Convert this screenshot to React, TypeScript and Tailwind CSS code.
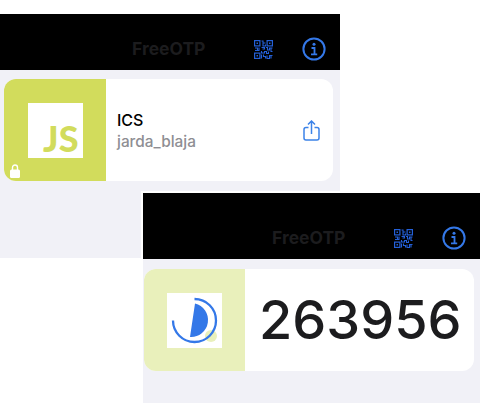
import React from 'react';

function QrIcon() {
  // QR glyph: three finder squares and a dense block of modules
  return (
    <svg width="19" height="19" viewBox="0 0 19 19" fill="none" stroke="#2460d8">
      <rect x="0.6" y="0.6" width="5.3" height="5.3" strokeWidth="1.2" />
      <rect x="13.1" y="0.6" width="5.3" height="5.3" strokeWidth="1.2" />
      <rect x="0.6" y="13.1" width="5.3" height="5.3" strokeWidth="1.2" />
      <path d="M2.5 2.5h1.5v1.5h-1.5zM15 2.5h1.5v1.5h-1.5zM2.5 15h1.5v1.5h-1.5z" fill="#2460d8" stroke="none" />
      <path
        d="M7.5 1h1.5v2h2.5M9 3v3h2.5V4.5M7.5 7.5h3v1.5h-2M1 8h2.5v2M5 7.5v3H1M12 7.5h1.5v2.5h2V8h3M17 8v3.5h1.5M7.5 11v2h3v-1.5h2v2h2v-2M7.5 14.5v4M9.5 14.5v2h2v2M13 15.5v3h2.500v-3h3M17 15.500v3"
        strokeWidth="1.1"
      />
    </svg>
  );
}

function InfoIcon() {
  return (
    <svg width="24" height="24" viewBox="0 0 24 24" fill="none" stroke="#3478e8">
      <circle cx="12" cy="12" r="10.6" strokeWidth="2" />
      <circle cx="12" cy="7.300" r="1.500" fill="#3478e8" stroke="none" />
      <path d="M9.500 11h3v6.200M9 17.300h6.200" strokeWidth="1.800" />
    </svg>
  );
}

function ShareIcon() {
  return (
    <svg width="17" height="21" viewBox="0 0 17 21" fill="none" stroke="#3b82e8" strokeWidth="1.5">
      <path d="M5.500 7.500H3a2 2 0 0 0-2 2v8.500a2 2 0 0 0 2 2h11a2 2 0 0 0 2-2V9.500a2 2 0 0 0-2-2h-2.500" />
      <path d="M8.500 14V1M5 4.500 8.500 1 12 4.500" />
    </svg>
  );
}

function LockIcon() {
  return (
    <svg width="10" height="14" viewBox="0 0 10 14" className="absolute left-[6px] bottom-[3px]">
      <path d="M2.500 6V3.500a2.500 2.500 0 0 1 5 0V6" fill="none" stroke="#fff" strokeWidth="1.400" />
      <rect x="0" y="5.500" width="10" height="8.500" rx="1.500" fill="#fff" />
    </svg>
  );
}

function Header({ heightClass, titleClass }: { heightClass: string; titleClass: string }) {
  return (
    <div className={`${heightClass} bg-black flex items-end`}>
      <div className={`h-[42px] flex items-center ${titleClass}`}>
        <span className="text-[17.500px] font-bold text-[#1c1c1e]">FreeOTP</span>
      </div>
      <div className="ml-auto h-[42px] flex items-center gap-[29px] pr-[14px]">
        <QrIcon />
        <InfoIcon />
      </div>
    </div>
  );
}

export default function App() {
  return (
    <div className="relative w-[480px] h-[419px] bg-white overflow-hidden font-['Inter','Liberation_Sans',sans-serif]">
      <div className="absolute left-0 top-[14px] w-[340px] h-[244px]">
        <Header heightClass="h-14" titleClass="pl-[132px]" />
        <div className="h-[188px] bg-[#f1f1f7] pt-[9px] px-[4px]">
          <div className="h-[102px] w-[329px] bg-white rounded-xl overflow-hidden flex items-center">
            <div className="relative w-[102px] h-full bg-[#d2dc5c] flex items-center justify-center">
              <div className="w-[55px] h-[55px] bg-white flex items-end justify-end pr-[4px] pb-[2px]">
                <span className="text-[36px] leading-[36px] font-black text-[#d2dc5c] font-['Lato',sans-serif]">JS</span>
              </div>
              <LockIcon />
            </div>
            <div className="flex-1 pl-[11px] pt-[2px] flex flex-col">
              <span className="text-[16px] leading-[21px] font-medium text-black">ICS</span>
              <span className="text-[15.400px] leading-[21px] font-medium text-[#8e8e93]">jarda_blaja</span>
            </div>
            <div className="mr-[13px]">
              <ShareIcon />
            </div>
          </div>
        </div>
      </div>

      <div className="absolute left-[141px] top-[191px] w-[339px] h-[214px] bg-white pl-[2px] pt-[2px]">
        <Header heightClass="h-[66px]" titleClass="pl-[129px]" />
        <div className="h-[144px] bg-[#f1f1f7] pt-[10px] pl-[1px] pr-[6px]">
          <div className="h-[102px] bg-white rounded-xl overflow-hidden flex items-center">
            <div className="w-[101px] h-full bg-[#e9f0bb] flex items-center justify-center">
              <div className="w-[55px] h-[55px] bg-white flex items-center justify-center">
                <svg width="55" height="55" viewBox="0 0 55 55">
                  <circle cx="44" cy="43" r="6" fill="#e9f0bb" />
                  <path d="M27.500 6A21.500 21.500 0 1 1 6 27.500" fill="none" stroke="#3478e8" strokeWidth="2.300" />
                  <path d="M28 10.500A17 17 0 0 1 23 44Z" fill="#3478e8" />
                </svg>
              </div>
            </div>
            <span className="flex-1 pl-[14px] text-[54px] leading-none font-medium text-[#1c1c1e] font-['Inter',sans-serif]">263956</span>
          </div>
        </div>
      </div>
    </div>
  );
}
